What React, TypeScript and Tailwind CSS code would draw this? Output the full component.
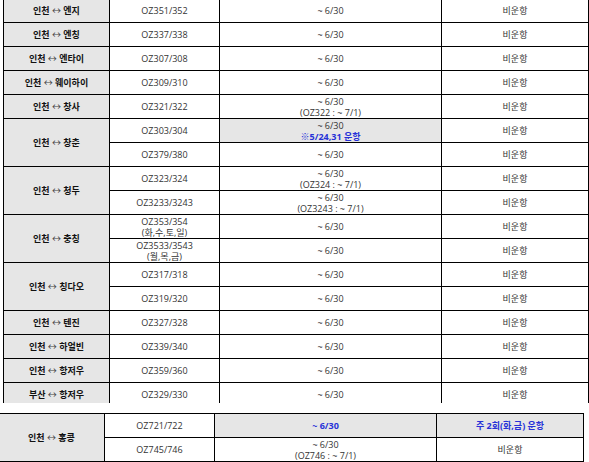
import React from 'react';

type Row = {
  route?: string;
  span?: number;
  flight: React.ReactNode;
  period: React.ReactNode;
  status: React.ReactNode;
  periodHighlight?: boolean;
  statusHighlight?: boolean;
};

const two = (a: string, b: string) => (
  <>
    <div>{a}</div>
    <div>{b}</div>
  </>
);

const upperRows: Row[] = [
  { route: '인천|엔지', flight: 'OZ351/352', period: '~ 6/30', status: '비운항' },
  { route: '인천|엔칭', flight: 'OZ337/338', period: '~ 6/30', status: '비운항' },
  { route: '인천|엔타이', flight: 'OZ307/308', period: '~ 6/30', status: '비운항' },
  { route: '인천|웨이하이', flight: 'OZ309/310', period: '~ 6/30', status: '비운항' },
  { route: '인천|창사', flight: 'OZ321/322', period: two('~ 6/30', '(OZ322 : ~ 7/1)'), status: '비운항' },
  {
    route: '인천|창춘',
    span: 2,
    flight: 'OZ303/304',
    period: (
      <>
        <div>~ 6/30</div>
        <div className="font-bold text-[#2632d8]">※5/24,31 운항</div>
      </>
    ),
    periodHighlight: true,
    status: '비운항',
  },
  { flight: 'OZ379/380', period: '~ 6/30', status: '비운항' },
  { route: '인천|청두', span: 2, flight: 'OZ323/324', period: two('~ 6/30', '(OZ324 : ~ 7/1)'), status: '비운항' },
  { flight: 'OZ3233/3243', period: two('~ 6/30', '(OZ3243 : ~ 7/1)'), status: '비운항' },
  { route: '인천|충칭', span: 2, flight: two('OZ353/354', '(화,수,토,일)'), period: '~ 6/30', status: '비운항' },
  { flight: two('OZ3533/3543', '(월,목,금)'), period: '~ 6/30', status: '비운항' },
  { route: '인천|칭다오', span: 2, flight: 'OZ317/318', period: '~ 6/30', status: '비운항' },
  { flight: 'OZ319/320', period: '~ 6/30', status: '비운항' },
  { route: '인천|텐진', flight: 'OZ327/328', period: '~ 6/30', status: '비운항' },
  { route: '인천|하얼빈', flight: 'OZ339/340', period: '~ 6/30', status: '비운항' },
  { route: '인천|항저우', flight: 'OZ359/360', period: '~ 6/30', status: '비운항' },
  { route: '부산|항저우', flight: 'OZ329/330', period: '~ 6/30', status: '비운항' },
];

const lowerRows: Row[] = [
  {
    route: '인천|홍콩',
    span: 2,
    flight: 'OZ721/722',
    period: <span className="font-bold text-[#2632d8]">~ 6/30</span>,
    periodHighlight: true,
    status: <span className="font-bold text-[#2632d8]">주 2회(화,금) 운항</span>,
    statusHighlight: true,
  },
  { flight: 'OZ745/746', period: two('~ 6/30', '(OZ746 : ~ 7/1)'), status: '비운항' },
];

const cell = 'border border-black text-center align-middle p-0';

function Route({ value }: { value: string }) {
  const [from, to] = value.split('|');
  return (
    <>
      {from} <span className="font-normal text-[#444]">↔</span> {to}
    </>
  );
}

function ScheduleTable({ rows }: { rows: Row[] }) {
  return (
    <table className="table-fixed border-collapse w-[585px] text-[9px] leading-[11px] text-[#333]">
      <colgroup>
        <col className="w-[106px]" />
        <col className="w-[110px]" />
        <col className="w-[222px]" />
        <col className="w-[147px]" />
      </colgroup>
      <tbody>
        {rows.map((r, i) => (
          <tr key={i} className="h-[24px]">
            {r.route && (
              <td rowSpan={r.span ?? 1} className={`${cell} bg-[#e6e6e6] font-bold text-[#111]`}>
                <Route value={r.route} />
              </td>
            )}
            <td className={cell}>{r.flight}</td>
            <td className={`${cell} ${r.periodHighlight ? 'bg-[#e6e6e6]' : ''}`}>{r.period}</td>
            <td className={`${cell} ${r.statusHighlight ? 'bg-[#e6e6e6]' : ''}`}>{r.status}</td>
          </tr>
        ))}
      </tbody>
    </table>
  );
}

export default function App() {
  return (
    <div
      className="w-[589px] h-[462px] overflow-hidden bg-white"
      style={{ fontFamily: '"Open Sans", "Noto Sans CJK KR", sans-serif' }}
    >
      <div className="h-[405px] -mt-[2px] ml-[3px] overflow-hidden">
        <ScheduleTable rows={upperRows} />
      </div>
      <div className="mt-[10px] -ml-[2px]">
        <ScheduleTable rows={lowerRows} />
      </div>
    </div>
  );
}
